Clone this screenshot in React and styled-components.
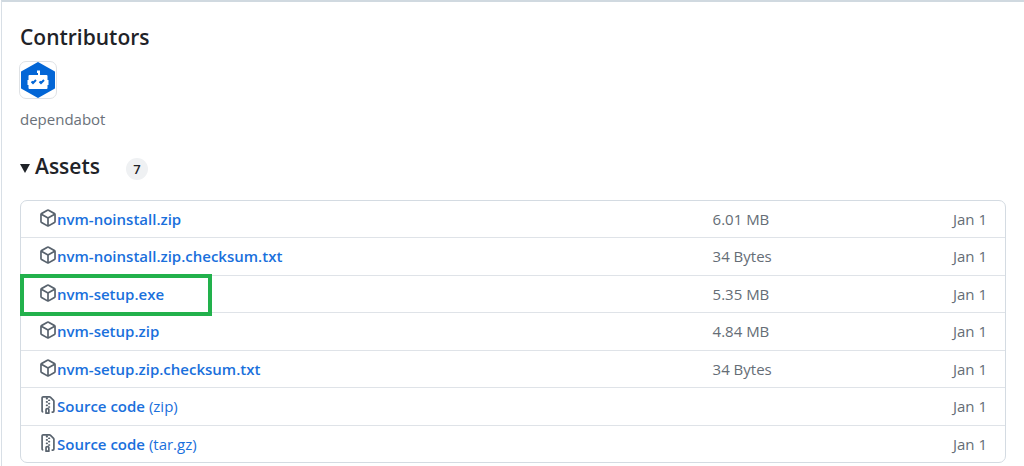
import React from 'react'
import styled, { createGlobalStyle } from 'styled-components'

const GlobalStyle = createGlobalStyle`
  * {
    box-sizing: border-box;
  }
  body {
    margin: 0;
    background-color: #ffffff;
    color: #1f2328;
    font-family: "Open Sans", "Noto Sans", sans-serif;
    font-size: 15px;
    line-height: 24px;
    overflow-x: hidden;
  }
`

const Release = styled.main`
  margin-left: 1px;
  padding: 20px 18px 3px;
  border-top: 2px solid #d0d9e0;
  border-left: 1px solid #d8dfe6;
`

const Title = styled.h2`
  margin: 0;
  font-size: 21px;
  font-weight: 600;
  line-height: 30px;
`

const Avatar = styled.a`
  display: flex;
  align-items: center;
  justify-content: center;
  width: 38px;
  height: 38px;
  margin: 9px 0 0 -1px;
  border: 1px solid #dfe2e5;
  border-radius: 7px;
`

const Contributor = styled.p`
  margin: 8px 0 0;
  color: #6a7179;
`

const Details = styled.details`
  margin-top: 20px;
`

const Summary = styled.summary`
  display: flex;
  align-items: center;
  list-style: none;
  cursor: pointer;
`

const Caret = styled.svg`
  width: 10px;
  height: 9px;
  margin: 4px 5px 0 0;
  fill: #1f2328;
`

const Counter = styled.span`
  min-width: 22px;
  margin: 5px 0 0 26px;
  border-radius: 11px;
  background-color: #eff1f3;
  font-size: 13px;
  font-weight: 600;
  line-height: 22px;
  text-align: center;
`

const AssetTable = styled.table`
  width: 100%;
  height: 263px;
  margin-top: 19px;
  border: 1px solid #d4dbe2;
  border-radius: 7px;
  border-spacing: 0;
`

const Cell = styled.td`
  position: relative;
  width: ${props => props.width || 'auto'};
  padding: 0 18px 0 0;
  border-top: ${props => props.first ? 'none' : '1px solid #dfe3e8'};
  color: #656d76;
  text-align: ${props => props.align || 'left'};
`

const NameCell = styled(Cell)`
  padding: 0 0 0 18px;
`

const AssetLink = styled.a`
  display: flex;
  align-items: center;
  color: #1a70dc;
  font-weight: 600;
  text-decoration: none;
  white-space: pre;
`

const Format = styled.span`
  font-weight: 400;
`

const Icon = styled.svg`
  width: 18px;
  height: 18px;
  margin-bottom: 2px;
  fill: #59636e;
`

const Highlight = styled.span`
  position: absolute;
  z-index: 1;
  top: -2px;
  left: -1px;
  width: 192px;
  height: 42px;
  border: 4px solid #22b14c;
  pointer-events: none;
`

const PACKAGE = 'm8.878.392 5.25 3.045c.54.314.872.89.872 1.514v6.098a1.75 1.75 0 0 1-.872 1.514l-5.25 3.045a1.75 1.75 0 0 1-1.756 0l-5.25-3.045A1.75 1.75 0 0 1 1 11.049V4.951c0-.624.332-1.201.872-1.514L7.122.392a1.75 1.75 0 0 1 1.756 0ZM7.875 1.69l-4.63 2.685L8 7.133l4.755-2.758-4.63-2.685a.248.248 0 0 0-.25 0ZM2.5 5.677v5.372c0 .09.047.171.125.216l4.625 2.683V8.432Zm6.25 8.271 4.625-2.683a.25.25 0 0 0 .125-.216V5.677L8.75 8.432Z'
const FILE_ZIP = 'M3.5 1.75v11.5c0 .09.048.173.126.217a.75.75 0 0 1-.752 1.298A1.748 1.748 0 0 1 2 13.25V1.75C2 .784 2.784 0 3.75 0h5.586c.464 0 .909.185 1.237.513l2.914 2.914c.329.328.513.773.513 1.237v8.586A1.75 1.75 0 0 1 12.25 15h-.5a.75.75 0 0 1 0-1.5h.5a.25.25 0 0 0 .25-.25V4.664a.25.25 0 0 0-.073-.177L9.513 1.573a.25.25 0 0 0-.177-.073H7.25a.75.75 0 0 1 0 1.5h-.5a.75.75 0 0 1 0-1.5h-3a.25.25 0 0 0-.25.25Zm3.75 8.75h.5c.966 0 1.75.784 1.75 1.75v3a.75.75 0 0 1-.75.75h-2.5a.75.75 0 0 1-.75-.75v-3c0-.966.784-1.75 1.75-1.75ZM6 5.25a.75.75 0 0 1 .75-.75h.5a.75.75 0 0 1 0 1.5h-.5A.75.75 0 0 1 6 5.25Zm.75 2.25h.5a.75.75 0 0 1 0 1.5h-.5a.75.75 0 0 1 0-1.5ZM8 6.75A.75.75 0 0 1 8.75 6h.5a.75.75 0 0 1 0 1.5h-.5A.75.75 0 0 1 8 6.75ZM8.75 3h.5a.75.75 0 0 1 0 1.5h-.5a.75.75 0 0 1 0-1.5ZM8 9.75A.75.75 0 0 1 8.75 9h.5a.75.75 0 0 1 0 1.5h-.5A.75.75 0 0 1 8 9.75Zm-1 2.5v2.25h1v-2.25a.25.25 0 0 0-.25-.25h-.5a.25.25 0 0 0-.25.25Z'

const assets = [
  { name: 'nvm-noinstall.zip', size: '6.01 MB' },
  { name: 'nvm-noinstall.zip.checksum.txt', size: '34 Bytes' },
  { name: 'nvm-setup.exe', size: '5.35 MB', highlighted: true },
  { name: 'nvm-setup.zip', size: '4.84 MB' },
  { name: 'nvm-setup.zip.checksum.txt', size: '34 Bytes' },
  { name: 'Source code', format: 'zip' },
  { name: 'Source code', format: 'tar.gz' }
]

const Dependabot = () => (
  <svg width='36' height='36' viewBox='0 0 36 36' aria-hidden='true'>
    <path fill='#0366d6' stroke='#0366d6' strokeWidth='2' strokeLinejoin='round' d='M18 1 34 10v16L18 35 2 26V10Z' />
    <path fill='#fff' d='M17 8.500h3V13H26.500a1 1 0 0 1 1 1v4h1V23h-1v3a1 1 0 0 1-1 1h-17a1 1 0 0 1-1-1v-3h-1v-5h1V14a1 1 0 0 1 1-1H18v-2h-1Z' />
    <path fill='none' stroke='#0366d6' strokeWidth='2' d='m11.500 19.500 1.500 1.500 3-3m3.500 1.500 1.500 1.500 3-3' />
  </svg>
)

function App () {
  return (
    <>
      <GlobalStyle />
      <Release>
        <Title>Contributors</Title>
        <Avatar href='#dependabot' aria-label='dependabot'>
          <Dependabot />
        </Avatar>
        <Contributor>dependabot</Contributor>
        <Details open>
          <Summary>
            <Caret viewBox='0 0 10 9' aria-hidden='true'>
              <path d='M0 0h10L5 9Z' />
            </Caret>
            <Title as='span'>Assets</Title>
            <Counter>7</Counter>
          </Summary>
          <AssetTable>
            <tbody>
              {assets.map(({ name, size, format, highlighted }, i) => (
                <tr key={name + format}>
                  <NameCell first={i === 0 ? 1 : undefined}>
                    <AssetLink href={`#${name}`}>
                      <Icon viewBox='0 0 16 16' aria-hidden='true'>
                        <path d={format ? FILE_ZIP : PACKAGE} />
                      </Icon>
                      {name}
                      {format && <Format> ({format})</Format>}
                    </AssetLink>
                    {highlighted && <Highlight />}
                  </NameCell>
                  <Cell first={i === 0 ? 1 : undefined} width='16%'>{size}</Cell>
                  <Cell first={i === 0 ? 1 : undefined} width='135px' align='right'>Jan 1</Cell>
                </tr>
              ))}
            </tbody>
          </AssetTable>
        </Details>
      </Release>
    </>
  )
}

export default App
